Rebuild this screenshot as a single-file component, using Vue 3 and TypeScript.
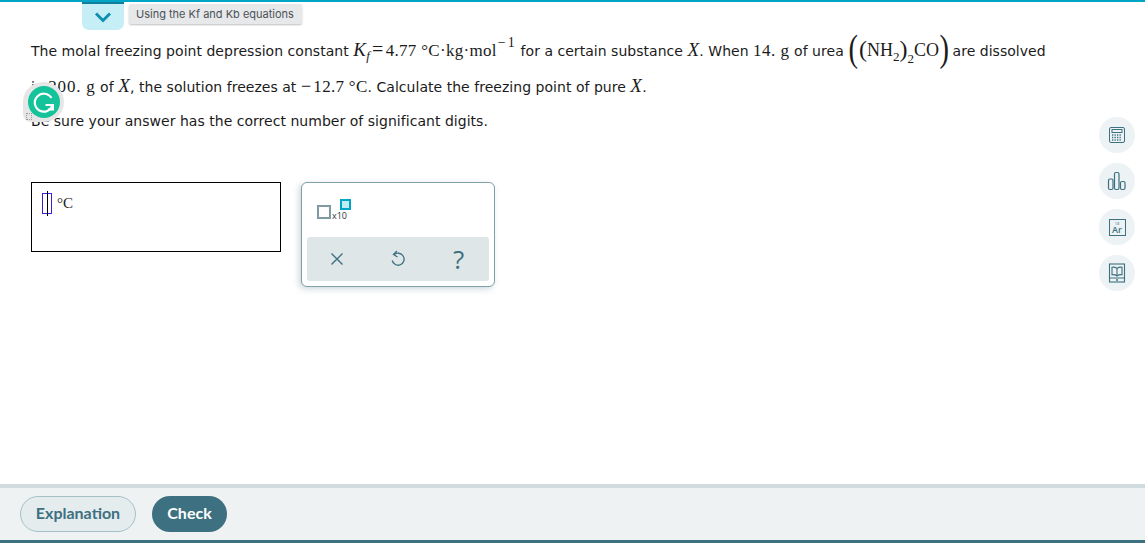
<script setup lang="ts">
const tools = ['calc', 'chart', 'table', 'book']
</script>

<template>
  <div class="page">
    <div class="top">
      <button class="tab">
        <svg width="18" height="12" viewBox="0 0 18 12"><path d="M2 2.500l7 7 7-7" fill="none" stroke="#0f8fb0" stroke-width="3" /></svg>
      </button>
      <span class="hint">Using the Kf and Kb equations</span>
    </div>

    <div class="question">
      <p class="line one">
        The molal freezing point depression constant
        <span class="m k"><i class="x">K</i><sub><i>f</i></sub></span><span class="m eq">=</span><span class="m">4.77 °C·kg·mol</span><span class="m sup">− 1</span>
        for a certain substance <i class="m x">X</i>. When <span class="m wide">14. g</span> of urea
        <span class="m formula"><span class="big">(</span><span class="mid">(</span>NH<sub>2</sub><span class="mid">)</span><sub class="low">2</sub>CO<span class="big">)</span></span>
        <span class="rest">are dissolved</span>
      </p>
      <p class="line two">in <span class="m wide two-g">200. g</span> of <i class="m x">X</i>, the solution freezes at <span class="m minus">−</span><span class="m">12.7 °C</span>. Calculate the freezing point of pure <i class="m x">X</i>.</p>
      <p class="line three">Be sure your answer has the correct number of significant digits.</p>
    </div>

    <div class="work">
      <div class="answer">
        <span class="slot"><span class="caret"></span></span>
        <span class="unit">°C</span>
      </div>
      <div class="palette">
        <div class="keys">
          <span class="box"></span><span class="x10">x10</span><span class="exp"></span>
        </div>
        <div class="actions">
          <svg width="16" height="16" viewBox="0 0 16 16"><path d="M2.500 2.500l11 11M13.500 2.500l-11 11" fill="none" stroke="#3d7080" stroke-width="1.400" /></svg>
          <svg width="16" height="18" viewBox="0 0 16 18"><path d="M7 1L3.500 4.500 7.500 7M4 4.800A6 6 0 1 1 2.200 10.500" fill="none" stroke="#3d7080" stroke-width="1.300" /></svg>
          <span class="help">?</span>
        </div>
      </div>
    </div>

    <div class="tools">
      <div v-for="t in tools" :key="t" class="tool">
        <svg v-if="t === 'calc'" width="18" height="18" viewBox="0 0 18 18" fill="none" stroke="#3d7080">
          <rect x="1.500" y="1.500" width="15" height="15" rx="1.500" />
          <rect x="4" y="3.500" width="10" height="3" />
          <path d="M4 9h10M4 11.500h10M4 14h10" stroke-dasharray="1.300 1.200" stroke-width="1.400" />
        </svg>
        <svg v-else-if="t === 'chart'" width="20" height="20" viewBox="0 0 20 20" fill="none" stroke="#3d7080" stroke-width="1.200">
          <rect x="1.500" y="8" width="4.500" height="10.500" rx="1.500" />
          <rect x="7.500" y="1.500" width="4.500" height="17" rx="1.500" />
          <rect x="13.500" y="10.500" width="4.500" height="8" rx="1.500" />
        </svg>
        <span v-else-if="t === 'table'" class="ar"><small>18</small><b>Ar</b></span>
        <svg v-else width="18" height="20" viewBox="0 0 18 20" fill="none" stroke="#3d7080" stroke-width="1.100">
          <rect x="1.500" y="1" width="15" height="18" />
          <path d="M1.500 15h15M9 5.500v7.500M9 5.500C7.500 4.300 5.500 4 4 4.300v7.500c1.500-.3 3.500 0 5 1.200 1.500-1.200 3.500-1.500 5-1.200V4.300c-1.500-.3-3.500 0-5 1.200z" />
          <path d="M8 17h2" stroke-width="1.500" />
        </svg>
      </div>
    </div>

    <div class="grammarly">
      <span class="dots"></span>
      <span class="g">
        <svg width="26" height="26" viewBox="0 0 26 26" fill="none" stroke="#fff" stroke-width="2.200">
          <path d="M20.500 9A9 9 0 1 0 21.500 16H14.500" />
          <path d="M17 20.500h5v-5" stroke-width="2" />
        </svg>
      </span>
    </div>

    <div class="footer">
      <button class="btn ghost">Explanation</button>
      <button class="btn solid">Check</button>
    </div>
  </div>
</template>

<style>
html, body { margin: 0; background: #fff; }
</style>

<style scoped>
.page {
  position: relative;
  width: 1145px;
  height: 543px;
  display: flex;
  flex-direction: column;
  overflow: hidden;
  border-top: 2px solid #00a5c6;
  box-sizing: border-box;
  font-family: "DejaVu Sans", Verdana, sans-serif;
  color: #1b1b1b;
}
.top {
  display: flex;
  align-items: flex-start;
  gap: 5px;
  padding-left: 82px;
  height: 33px;
}
.tab {
  width: 42px;
  height: 28px;
  padding: 0;
  border: 0;
  border-top: 2px solid #0f7f9c;
  border-radius: 0 0 7px 7px;
  background: #c5eef6;
  display: flex;
  align-items: center;
  justify-content: center;
  box-sizing: border-box;
}
.hint {
  margin-top: 2px;
  height: 20px;
  line-height: 20px;
  padding: 0 8px 0 7px;
  background: #e7e8ea;
  border-radius: 2px;
  box-shadow: 0 1px 2px rgba(0, 0, 0, .25);
  font-size: 11px;
  color: #4a5257;
  font-family: Inter, sans-serif;
}
.question { padding-left: 31px; }
.line { margin: 0; font-size: 14px; white-space: nowrap; letter-spacing: .03px; }
.one { height: 36px; line-height: 28px; }
.two { height: 34px; line-height: 30px; }
.three { height: 32px; line-height: 32px; }
.m { font-family: "Liberation Serif", serif; font-size: 17px; letter-spacing: .3px; }
.m i { font-family: "Liberation Serif", serif; }
.x { font-size: 19px; }
.wide { letter-spacing: .5px; }
.two-g { letter-spacing: .8px; }
.minus { margin-right: 2px; font-size: 18px; }
sub { font-size: 13px; line-height: 0; }
.low { vertical-align: -7px; }
.k { margin-right: 1px; }
.eq { margin: 0 2px 0 1px; font-size: 20px; }
.sup { font-size: 14px; position: relative; top: -9px; margin: 0 1px 0 1px; word-spacing: -2px; }
.formula { font-size: 18px; letter-spacing: 0; }
.rest { margin-left: 3px; }
.big { font-size: 38px; font-weight: 200; line-height: 0; vertical-align: -5px; transform: scaleX(.75); display: inline-block; margin: 0 -1px; }
.mid { font-size: 24px; line-height: 0; vertical-align: -1px; }
.work {
  display: flex;
  align-items: flex-start;
  gap: 20px;
  padding: 45px 0 0 31px;
}
.answer {
  width: 250px;
  height: 70px;
  border: 1px solid #000;
  box-sizing: border-box;
  display: flex;
  align-items: flex-start;
  gap: 5px;
  padding: 10px 0 0 10px;
}
.slot {
  width: 10px;
  height: 21px;
  box-sizing: border-box;
  border: 1px solid #3a1fd8;
  display: flex;
  justify-content: center;
}
.caret { width: 1px; height: 25px; margin-top: -3px; background: #000; flex: none; }
.unit { font-family: "Liberation Serif", serif; font-size: 15px; line-height: 20px; }
.palette {
  width: 194px;
  height: 105px;
  border: 1px solid #7fa0a8;
  border-radius: 6px;
  box-sizing: border-box;
  box-shadow: -2px 2px 6px rgba(60, 100, 110, .25);
  padding: 5px;
  display: flex;
  flex-direction: column;
  justify-content: flex-end;
  background: #fff;
}
.keys {
  position: relative;
  flex: 1;
  display: flex;
  align-items: flex-start;
  padding: 17px 0 0 10px;
}
.box { width: 10px; height: 10px; border: 2px solid #7f9aa3; }
.x10 { font-family: "Open Sans", sans-serif; font-size: 9px; line-height: 10px; margin: 6px 0 0 1px; color: #333; }
.exp {
  position: absolute;
  left: 33px;
  top: 11px;
  width: 7px;
  height: 7px;
  border: 2px solid #00a5c6;
  background: #bdeef7;
}
.actions {
  height: 44px;
  background: #dfe6e8;
  border-radius: 3px;
  display: grid;
  grid-template-columns: repeat(3, 1fr);
  align-items: center;
  justify-items: center;
}
.help { font-family: "Open Sans", sans-serif; font-size: 26px; font-weight: 400; line-height: 30px; color: #3d7080; }
.tools {
  position: absolute;
  left: 1099px;
  top: 115px;
  display: flex;
  flex-direction: column;
  gap: 10px;
}
.tool {
  width: 36px;
  height: 36px;
  border-radius: 50%;
  background: #edf2f4;
  display: flex;
  align-items: center;
  justify-content: center;
}
.ar {
  width: 17px;
  height: 17px;
  box-sizing: border-box;
  border: 1px solid #3d7080;
  font-family: "Open Sans", sans-serif;
  color: #3d7080;
  text-align: center;
  display: flex;
  flex-direction: column;
  justify-content: center;
}
.ar small { font-size: 4px; line-height: 5px; }
.ar b { font-size: 9px; font-weight: 600; line-height: 8px; }
.grammarly {
  position: absolute;
  left: 23px;
  top: 80px;
  width: 41px;
  height: 40px;
  border-radius: 50% 50% 50% 8px;
  background: #e6e6e6;
}
.g {
  position: absolute;
  left: 5px;
  top: 4px;
  width: 32px;
  height: 32px;
  border-radius: 50%;
  background: #15c39a;
  display: flex;
  align-items: center;
  justify-content: center;
}
.dots {
  position: absolute;
  left: 3px;
  bottom: 2px;
  width: 4px;
  height: 5px;
  border: 1px dotted #999;
}
.footer {
  margin-top: auto;
  height: 59px;
  border-top: 4px solid #d0dcdf;
  border-bottom: 3px solid #3d7080;
  background: #eef2f3;
  box-sizing: border-box;
  display: flex;
  align-items: center;
  gap: 16px;
  padding-left: 20px;
}
.btn {
  height: 36px;
  border-radius: 18px;
  font-family: Lato, sans-serif;
  font-size: 16px;
  font-weight: 700;
  padding: 0 0 3px;
}
.ghost { width: 116px; background: #e5ecee; border: 1px solid #a5c0c8; color: #3d7080; }
.solid { width: 75px; background: #3d7080; border: 0; color: #fff; }
</style>
